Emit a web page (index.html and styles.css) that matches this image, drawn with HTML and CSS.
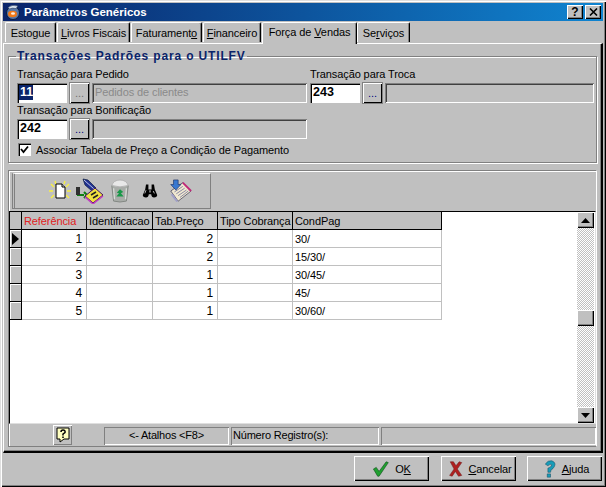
FILE: index.html
```html
<!DOCTYPE html>
<html lang="pt">
<head>
<meta charset="utf-8">
<title>Parâmetros Genéricos</title>
<link rel="stylesheet" href="styles.css">
</head>
<body>
<div class="window">
  <div class="titlebar">
    <svg class="appicon" width="16" height="16" viewBox="0 0 16 16"><circle cx="8" cy="9" r="6.500" fill="#5878a8" stroke="#0c1c3c" stroke-width="1"/><path d="M3 3.500 Q7 0 13 2 L11 4.500 Q7 3.500 4.500 5 Z" fill="#d8e4f0" stroke="#203050" stroke-width=".5"/><ellipse cx="7.500" cy="10" rx="4.500" ry="3.200" fill="#f07818"/><ellipse cx="8" cy="9.500" rx="2" ry="1.200" fill="#fff0e0"/></svg>
    <span class="titletext">Parâmetros Genéricos</span>
    <div class="titlebtns">
      <button class="capbtn help">?</button>
      <button class="capbtn close"><svg width="9" height="8" viewBox="0 0 9 8"><path d="M1 0.500 L8 7.500 M8 0.500 L1 7.500" stroke="#000" stroke-width="1.600"/></svg></button>
    </div>
  </div>

  <div class="tabs">
    <div class="tab w-estoque">Estogue</div>
    <div class="tab w-livros"><u>L</u>ivros Fiscais</div>
    <div class="tab w-fat">Faturament<u>o</u></div>
    <div class="tab w-fin"><u>F</u>inanceiro</div>
    <div class="tab active w-forca">Força de <u>V</u>endas</div>
    <div class="tab w-serv">Se<u>r</u>viços</div>
  </div>

  <div class="page">
    <fieldset class="group">
      <legend>Transações Padrões para o UTILFV</legend>
      <div class="fields">
        <div class="field">
          <div class="lbl">Transação para Pedido</div>
          <div class="ctrls">
            <div class="input"><span class="sel">11</span></div>
            <div class="dots muted">...</div>
            <div class="desc wide">Pedidos de clientes</div>
          </div>
        </div>
        <div class="field">
          <div class="lbl">Transação para Troca</div>
          <div class="ctrls">
            <div class="input">243</div>
            <div class="dots">...</div>
            <div class="desc right"></div>
          </div>
        </div>
        <div class="field">
          <div class="lbl">Transação para Bonificação</div>
          <div class="ctrls">
            <div class="input">242</div>
            <div class="dots">...</div>
            <div class="desc wide"></div>
          </div>
        </div>
      </div>
      <div class="check">
        <span class="box"><svg width="9" height="9" viewBox="0 0 9 9"><path d="M1 4 L3.500 7 L8 1.500" fill="none" stroke="#000" stroke-width="1.800"/></svg></span>
        <span>Associar Tabela de Preço a Condição de Pagamento</span>
      </div>
    </fieldset>

    <div class="panel">
      <div class="toolbar">
        <div class="toolgroup">
          <div class="toolcell"><svg width="24" height="24" viewBox="0 0 24 24"><path d="M3 5 L6 8 M3 19 L6 16 M21 5 L18 8 M21 19 L18 16 M1 12 L5 12 M23 12 L19 12 M7 2 L8 5 M17 2 L16 5" stroke="#f8f040" stroke-width="1.400"/><path d="M8 5 H14 L17 8 V19 H8 Z" fill="#fff" stroke="#000"/><path d="M14 5 V8 H17" fill="#d8d8d8" stroke="#000"/></svg></div>
          <div class="toolcell"><svg width="28" height="26" viewBox="0 0 28 26"><path d="M7 1 L12 2 L20 10 L16 13 L9 7 Z" fill="#203090" stroke="#102040" stroke-width=".7"/><path d="M8 2 L18 11" stroke="#c0c8e8" stroke-width="1"/><path d="M2 10 V17 H8 M8 14 L11 17 L8 20" fill="none" stroke="#108010" stroke-width="2"/><path d="M0 9 H4 V17 H0 Z" fill="#303030"/><path d="M9 18 L19 10 L27 17 L17 25 Z" fill="#f0e040" stroke="#401060" stroke-width="1"/><path d="M9 19 L17 26 L27 18" fill="none" stroke="#c040c0" stroke-width="1.400"/><path d="M15 17 L20 14 M17 20 L22 17" stroke="#202020" stroke-width="1.500"/></svg></div>
          <div class="toolcell"><svg width="22" height="24" viewBox="0 0 24 26"><path d="M3 7 L21 7 L19 24 Q12 26 5 24 Z" fill="#a8aca8" stroke="#808480"/><path d="M3 7 Q5 1 12 1 Q19 1 21 7 Q12 10 3 7 Z" fill="#e8e8e8" stroke="#b0b0b0"/><path d="M5 10 L6 22 M19 10 L18 22" stroke="#d8dcd8" stroke-width="1.400"/><path d="M12 11 L15.500 14 L13 15.500 L16 19 L8 19 L11 15.500 L8.500 15 Z" fill="#189848"/></svg></div>
          <div class="toolcell"><svg width="18" height="16" viewBox="0 0 22 20"><path d="M6 2 H9 V8 H13 V2 H16 L17 8 L20 15 Q20 18 16 18 Q13 18 12.500 14 H9.500 Q9 18 6 18 Q2 18 2 15 L5 8 Z" fill="#000"/><path d="M4.500 13 L6 9 M15 10 L16.500 13" stroke="#d8d8d8" stroke-width="1"/><path d="M10 9 H12 V12 H10 Z" fill="#909090"/></svg></div>
          <div class="toolcell"><svg width="24" height="24" viewBox="0 0 26 26"><path d="M3 13 L16 4 L25 13 L11 24 Z" fill="#f0e8d0" stroke="#404058" stroke-width=".8"/><path d="M7 14 L16 8 M9 16 L18 10 M11 18 L20 12 M13 20 L22 13" stroke="#8080a0" stroke-width="1"/><path d="M16 4 L25 13" stroke="#c02878" stroke-width="2"/><path d="M5 16 L11 24 L9 25 L3 17 Z" fill="#a0a0c8"/><path d="M6 1 H11 V6 H14 L8.500 12 L3 6 H6 Z" fill="#3878d0" stroke="#183068" stroke-width=".7"/></svg></div>
        </div>
      </div>

      <div class="gridarea">
        <div class="tablewrap">
          <table class="dbgrid">
            <colgroup><col class="c0"><col class="c1"><col class="c2"><col class="c3"><col class="c4"><col class="c5"></colgroup>
            <thead>
              <tr><th></th><th class="red">Referência</th><th>Identificacao</th><th>Tab.Preço</th><th>Tipo Cobrança</th><th>CondPag</th></tr>
            </thead>
            <tbody>
              <tr><th class="ind"><svg width="7" height="12" viewBox="0 0 7 12"><path d="M0 0 L7 6 L0 12 Z" fill="#000"/></svg></th><td class="num">1</td><td></td><td class="num">2</td><td></td><td>30/</td></tr>
              <tr><th class="ind"></th><td class="num">2</td><td></td><td class="num">2</td><td></td><td>15/30/</td></tr>
              <tr><th class="ind"></th><td class="num">3</td><td></td><td class="num">1</td><td></td><td>30/45/</td></tr>
              <tr><th class="ind"></th><td class="num">4</td><td></td><td class="num">1</td><td></td><td>45/</td></tr>
              <tr><th class="ind"></th><td class="num">5</td><td></td><td class="num">1</td><td></td><td>30/60/</td></tr>
            </tbody>
          </table>
        </div>
        <div class="scrollbar">
          <div class="sbtn"><svg width="9" height="5" viewBox="0 0 9 5"><path d="M4.500 0 L9 5 H0 Z" fill="#000"/></svg></div>
          <div class="strack top"></div>
          <div class="sthumb"></div>
          <div class="strack bottom"></div>
          <div class="sbtn"><svg width="9" height="5" viewBox="0 0 9 5"><path d="M0 0 H9 L4.500 5 Z" fill="#000"/></svg></div>
        </div>
      </div>

      <div class="status">
        <div class="helpbtn"><svg width="16" height="16" viewBox="0 0 16 16"><path d="M2 1 H14 V12 H9 L5 15 V12 H2 Z" fill="#ffffc0" stroke="#000"/><path d="M6 5 Q6 3 8 3 Q10.500 3 10 5.500 L8 7 V8.500" fill="none" stroke="#000" stroke-width="1.500"/><path d="M7.200 9.500 H8.800 V11 H7.200 Z" fill="#000"/></svg></div>
        <div class="stat s-atalhos">&lt;- Atalhos &lt;F8&gt;</div>
        <div class="stat s-num">Número Registro(s):</div>
        <div class="stat s-rest"></div>
      </div>
    </div>
  </div>

  <div class="footer">
    <button class="btn b-ok">
      <svg width="17" height="16" viewBox="0 0 24 20" preserveAspectRatio="none"><path d="M2 10 L6 8 L10 13 L20 1 L23 2 L10 19 L8 19 Z" fill="#20a030" stroke="#0c4c18" stroke-width=".8"/></svg>
      <span>O<u>K</u></span>
    </button>
    <button class="btn b-cancel">
      <svg width="14" height="16" viewBox="0 0 22 20" preserveAspectRatio="none"><path d="M2 1 L7 1 L11 6 L16 1 L20 2 L13 10 L20 18 L15 19 L10 13 L5 19 L1 18 L8 10 Z" fill="#b02020" stroke="#702020" stroke-width=".8"/></svg>
      <span><u>C</u>ancelar</span>
    </button>
    <button class="btn b-help">
      <svg width="13" height="18" viewBox="0 0 20 22" preserveAspectRatio="none"><path d="M2 5 Q6 0 12 1 Q19 3 16 8 Q14 11 11 12 L10 15 L6 15 L6 10 Q11 9 12 6 Q10 4 6 7 Z" fill="#189cb8" stroke="#104860" stroke-width=".7"/><path d="M5 17 H10 V21 H5 Z" fill="#189cb8" stroke="#104860" stroke-width=".7"/></svg>
      <span><u>A</u>juda</span>
    </button>
  </div>
</div>
</body>
</html>
```

FILE: styles.css
```css
* { box-sizing: border-box; }
html, body { margin: 0; padding: 0; }
body {
  width: 606px;
  height: 487px;
  overflow: hidden;
  font: 11px/14px "Liberation Sans", Arial, sans-serif;
  letter-spacing: -.1px;
  color: #000;
  background: #c0c0c0;
}
.window {
  width: 606px;
  height: 487px;
  padding: 3px;
  display: flex;
  flex-direction: column;
  background: #c0c0c0;
  box-shadow: inset 1px 1px #dfdfdf, inset 2px 2px #fff, inset -1px -1px #000, inset -2px -2px #808080;
}
.titlebar {
  height: 18px;
  flex: none;
  display: flex;
  align-items: center;
  padding: 0 2px;
  background: linear-gradient(90deg, #0a246a 0%, #1084d0 100%);
  color: #fff;
}
.appicon { flex: none; margin-right: 3px; }
.titletext { font-weight: bold; font-size: 11.500px; letter-spacing: 0; flex: 1; }
.titlebtns { display: flex; gap: 2px; }
.capbtn {
  width: 16px; height: 14px; padding: 0; border: 0;
  background: #c0c0c0;
  display: flex; align-items: center; justify-content: center;
  font: bold 12px/14px "Liberation Sans", sans-serif; color: #000;
  box-shadow: inset 1px 1px #fff, inset -1px -1px #000, inset -2px -2px #808080;
}
.tabs {
  height: 22px;
  flex: none;
  display: flex;
  align-items: flex-end;
  padding: 1px 0 0 2px;
}
.tab {
  height: 20px;
  padding-top: 3px;
  text-align: center;
  border-top: 1px solid #fff;
  border-left: 1px solid #fff;
  border-right: 1px solid #000;
  box-shadow: inset -1px 0 #808080;
  border-radius: 2px 2px 0 0;
  margin-bottom: 1px;
  white-space: nowrap;
}
.tab.active {
  height: 22px;
  padding-top: 2px;
  margin-bottom: -1px;
  background: #c0c0c0;
  position: relative;
}
.w-estoque { width: 51px; margin-right: 1px; }
.w-livros { width: 73px; margin-right: 1px; }
.w-fat { width: 71px; margin-right: 1px; }
.w-fin { width: 58px; margin-right: 1px; }
.w-forca { width: 95px; }
.w-serv { width: 53px; }
.page {
  flex: 1;
  min-height: 0;
  padding: 5px 0 0 4px;
  border-top: 1px solid #fff;
  border-left: 1px solid #fff;
  border-bottom: 2px solid #000;
  border-right: 2px solid #000;
  box-shadow: inset -1px -1px #808080;
}
.group {
  width: 589px;
  height: 114px;
  margin: 0;
  padding: 0 0 0 8px;
  border: 1px solid #808080;
  box-shadow: 1px 1px #fff, inset 1px 1px #fff;
}
.group legend {
  padding: 0 1px;
  margin-left: -1px;
  color: #0a246a;
  font-weight: bold;
  font-size: 12px;
  line-height: 14px;
  letter-spacing: .85px;
}
.fields {
  display: grid;
  grid-template-columns: 293px 1fr;
  row-gap: 0;
  padding-top: 4px;
}
.lbl { height: 14px; margin-bottom: 2px; line-height: 14px; }
.ctrls { display: flex; gap: 3px; height: 20px; }
.input {
  width: 50px; height: 20px;
  background: #fff;
  font-weight: bold; font-size: 12.500px; line-height: 17px;
  letter-spacing: 0;
  padding: 1px 0 0 3px;
  box-shadow: inset 1px 1px #808080, inset 2px 2px #000, inset -1px -1px #fff;
}
.sel { background: #0a246a; color: #fff; display: inline-block; width: 14px; height: 15px; line-height: 15px; margin-left: -1px; padding-left: 1px; }
.dots {
  width: 19px; height: 20px;
  background: #c0c0c0;
  text-align: center;
  color: #000080;
  line-height: 20px;
  box-shadow: inset 1px 1px #fff, inset -1px -1px #000, 0 0 0 1px #808080;
}
.dots.muted { color: #707070; }
.desc {
  height: 20px;
  padding: 2px 3px;
  color: #8a8a8a;
  box-shadow: inset 1px 1px #808080, inset -1px -1px #fff, inset 2px 2px #404040;
}
.wide { width: 215px; }
.right { width: 209px; }
.check { display: flex; align-items: center; gap: 5px; padding: 3px 0 0 1px; height: 18px; }
.box {
  width: 13px; height: 13px;
  background: #fff;
  display: flex; align-items: center; justify-content: center;
  box-shadow: inset 1px 1px #808080, inset 2px 2px #000, inset -1px -1px #fff;
}
.panel {
  width: 589px;
  height: 277px;
  margin-top: 7px;
  display: flex;
  flex-direction: column;
  border-top: 1px solid #808080;
  border-left: 1px solid #808080;
  border-bottom: 1px solid #808080;
  border-right: 1px solid #fff;
  box-shadow: inset 1px 1px #fff;
}
.toolbar {
  height: 40px;
  flex: none;
  padding: 2px 0 0 3px;
}
.toolgroup {
  width: 199px;
  height: 36px;
  padding-left: 30px;
  display: flex;
  align-items: center;
  border-top: 1px solid #fff;
  border-left: 3px double #808080;
  border-right: 1px solid #808080;
  border-bottom: 1px solid #808080;
}
.toolcell { width: 30px; flex: none; display: flex; justify-content: center; align-items: center; }
.gridarea {
  height: 213px;
  flex: none;
  display: flex;
  background: #fff;
  border-top: 1px solid #000;
  border-left: 1px solid #000;
  border-right: 1px solid #dfdfdf;
  border-bottom: 1px solid #dfdfdf;
  padding-right: 1px;
}
.tablewrap { flex: 1; min-width: 0; }
.dbgrid {
  border-collapse: separate;
  border-spacing: 0;
  table-layout: fixed;
  width: 432px;
}
.c0 { width: 12px; }
.c1 { width: 65px; }
.c2 { width: 66px; }
.c3 { width: 65px; }
.c4 { width: 75px; }
.c5 { width: 149px; }
.dbgrid th, .dbgrid td {
  height: 18px;
  padding: 0 2px;
  font-weight: normal;
  text-align: left;
  white-space: nowrap;
  overflow: hidden;
  line-height: 14px;
}
.dbgrid thead th {
  background: #c0c0c0;
  border-right: 1px solid #000;
  border-bottom: 1px solid #000;
}
.dbgrid th.red { color: #e02020; }
.dbgrid th.ind {
  padding: 0 0 0 2px;
  background: #c0c0c0;
  border-right: 1px solid #000;
  border-bottom: 1px solid #000;
  box-shadow: inset 1px 1px #fff;
  line-height: 0;
}
.dbgrid td {
  border-right: 1px solid #c0c0c0;
  border-bottom: 1px solid #c0c0c0;
}
.dbgrid td.num { text-align: right; padding-right: 4px; font-size: 12px; }
.scrollbar {
  width: 17px;
  flex: none;
  display: flex;
  flex-direction: column;
}
.sbtn, .sthumb {
  height: 16px;
  flex: none;
  background: #c0c0c0;
  display: flex; align-items: center; justify-content: center;
  box-shadow: inset 1px 1px #fff, inset -1px -1px #000, inset -2px -2px #808080;
}
.strack {
  background: repeating-conic-gradient(#fff 0 25%, #c0c0c0 0 50%) 0 0 / 2px 2px;
}
.strack.top { height: 82px; flex: none; }
.strack.bottom { flex: 1; }
.status {
  flex: 1;
  display: flex;
  align-items: flex-end;
  padding: 0 0 1px 0;
}
.helpbtn {
  width: 19px; height: 20px;
  margin: 0 32px 0 44px;
  display: flex; align-items: center; justify-content: center;
  box-shadow: inset 1px 1px #fff, inset -1px -1px #808080;
}
.stat {
  height: 18px;
  line-height: 17px;
  letter-spacing: -.2px;
  box-shadow: inset 1px 1px #808080, inset -1px -1px #fff;
  padding: 0 2px;
  white-space: nowrap;
}
.s-atalhos { width: 125px; text-align: center; margin-right: 2px; }
.s-num { width: 148px; margin-right: 2px; }
.s-rest { width: 215px; }
.footer {
  height: 31px;
  flex: none;
  display: flex;
  justify-content: flex-end;
  gap: 12px;
  padding: 3px 1px 0 0;
}
.btn {
  width: 75px; height: 25px;
  padding: 0;
  border: 0;
  background: #c0c0c0;
  display: flex; align-items: center; justify-content: center; gap: 5px;
  font: 11px/14px "Liberation Sans", sans-serif;
  letter-spacing: -.1px;
  color: #000;
  box-shadow: inset 1px 1px #fff, inset -1px -1px #000, inset -2px -2px #808080;
}
.b-ok { gap: 6px; }
.b-cancel { padding-left: 4px; margin-right: -1px; }
.b-help { padding-left: 4px; }
```
